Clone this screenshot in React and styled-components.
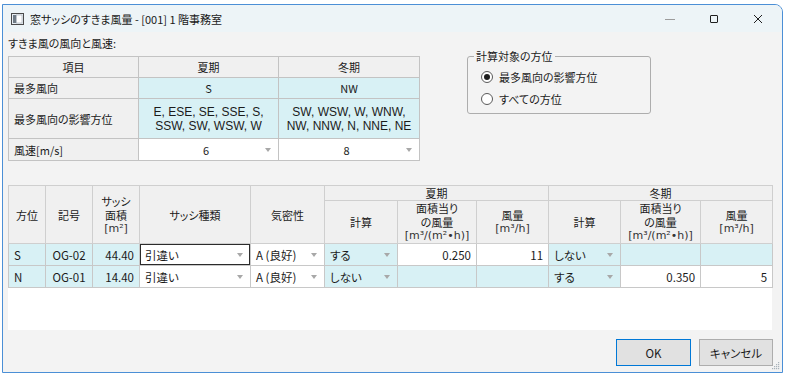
import React from "react";
import styled, { createGlobalStyle } from "styled-components";

const GlobalStyle = createGlobalStyle`
  html, body {
    margin: 0;
    padding: 0;
    background: #ffffff;
  }
  body {
    font-family: "Noto Sans CJK JP", "Noto Sans", sans-serif;
    font-size: 11px;
    color: #1b1b1b;
    font-feature-settings: "palt";
  }
  * {
    box-sizing: border-box;
  }
`;

const summer = {
  direction: "S",
  affected: ["E, ESE, SE, SSE, S,", "SSW, SW, WSW, W"],
  speed: "6",
};

const winter = {
  direction: "NW",
  affected: ["SW, WSW, W, WNW,", "NW, NNW, N, NNE, NE"],
  speed: "8",
};

const rows = [
  {
    dir: "S",
    code: "OG-02",
    area: "44.40",
    sash: "引違い",
    tight: "A (良好)",
    summer: { calc: "する", rate: "0.250", flow: "11" },
    winter: { calc: "しない", rate: "", flow: "" },
    selected: true,
  },
  {
    dir: "N",
    code: "OG-01",
    area: "14.40",
    sash: "引違い",
    tight: "A (良好)",
    summer: { calc: "しない", rate: "", flow: "" },
    winter: { calc: "する", rate: "0.350", flow: "5" },
  },
];

const gridCols = [37, 47, 47, 111, 74, 73, 79, 72, 72, 80, 72];

const App = () => {
  return (
    <>
      <GlobalStyle />
      <Window>
        <TitleBar>
          <TitleIcon width="13" height="12" viewBox="0 0 13 12">
            <rect x="0.5" y="0.5" width="12" height="11" fill="#e8eef3" stroke="#4a4a4a" />
            <rect x="2" y="2" width="3" height="8" fill="#6f7b86" />
            <rect x="5.5" y="2" width="5.5" height="8" fill="#ffffff" stroke="#9aa4ad" strokeWidth="0.6" />
          </TitleIcon>
          <Title>窓サッシのすきま風量 - [001] 1 階事務室</Title>
          <Controls>
            <ControlButton>
              <svg width="10" height="10" viewBox="0 0 10 10">
                <line x1="0" y1="5.5" x2="10" y2="5.5" stroke="#9c9c9c" />
              </svg>
            </ControlButton>
            <ControlButton>
              <svg width="10" height="10" viewBox="0 0 10 10">
                <rect x="1.5" y="1.5" width="7" height="7" rx="0.5" fill="none" stroke="#1f1f1f" />
              </svg>
            </ControlButton>
            <ControlButton>
              <svg width="10" height="10" viewBox="0 0 10 10">
                <path d="M1 1 L9 9 M9 1 L1 9" stroke="#1f1f1f" strokeWidth="1" />
              </svg>
            </ControlButton>
          </Controls>
        </TitleBar>

        <Body>
          <SectionLabel>すきま風の風向と風速:</SectionLabel>
          <TopRow>
            <WindTable>
              <colgroup>
                <col style={{ width: 130 }} />
                <col style={{ width: 140 }} />
                <col style={{ width: 141 }} />
              </colgroup>
              <tbody>
                <tr>
                  <HeadCell $h={21}>項目</HeadCell>
                  <HeadCell>夏期</HeadCell>
                  <HeadCell>冬期</HeadCell>
                </tr>
                <tr>
                  <RowLabel $h={21}>最多風向</RowLabel>
                  <ValueCell>{summer.direction}</ValueCell>
                  <ValueCell>{winter.direction}</ValueCell>
                </tr>
                <tr>
                  <RowLabel $h={40}>最多風向の影響方位</RowLabel>
                  <ValueCell>
                    {summer.affected.map((l) => (
                      <Line key={l}>{l}</Line>
                    ))}
                  </ValueCell>
                  <ValueCell>
                    {winter.affected.map((l) => (
                      <Line key={l}>{l}</Line>
                    ))}
                  </ValueCell>
                </tr>
                <tr>
                  <RowLabel $h={22}>風速[m/s]</RowLabel>
                  <ValueCell $white>
                    <Combo $center>
                      <span>{summer.speed}</span>
                      <Arrow />
                    </Combo>
                  </ValueCell>
                  <ValueCell $white>
                    <Combo $center>
                      <span>{winter.speed}</span>
                      <Arrow />
                    </Combo>
                  </ValueCell>
                </tr>
              </tbody>
            </WindTable>

            <GroupBox>
              <Legend>計算対象の方位</Legend>
              <RadioRow>
                <RadioMark $checked />
                最多風向の影響方位
              </RadioRow>
              <RadioRow>
                <RadioMark />
                すべての方位
              </RadioRow>
            </GroupBox>
          </TopRow>

          <GridBox>
            <Grid>
              <colgroup>
                {gridCols.map((w, i) => (
                  <col key={i} style={{ width: w }} />
                ))}
              </colgroup>
              <thead>
                <tr>
                  <GridHead rowSpan={2} $h={21}>方位</GridHead>
                  <GridHead rowSpan={2}>記号</GridHead>
                  <GridHead rowSpan={2}>
                    <HeadLine>サッシ</HeadLine>
                    <HeadLine>面積</HeadLine>
                    <Unit>[m²]</Unit>
                  </GridHead>
                  <GridHead rowSpan={2}>サッシ種類</GridHead>
                  <GridHead rowSpan={2}>気密性</GridHead>
                  <GridHead colSpan={3}>夏期</GridHead>
                  <GridHead colSpan={3}>冬期</GridHead>
                </tr>
                <tr>
                  <GridHead $h={42}>計算</GridHead>
                  <GridHead>
                    <HeadLine>面積当り</HeadLine>
                    <HeadLine>の風量</HeadLine>
                    <Unit>[m³/(m²•h)]</Unit>
                  </GridHead>
                  <GridHead>
                    <HeadLine>風量</HeadLine>
                    <Unit>[m³/h]</Unit>
                  </GridHead>
                  <GridHead>計算</GridHead>
                  <GridHead>
                    <HeadLine>面積当り</HeadLine>
                    <HeadLine>の風量</HeadLine>
                    <Unit>[m³/(m²•h)]</Unit>
                  </GridHead>
                  <GridHead>
                    <HeadLine>風量</HeadLine>
                    <Unit>[m³/h]</Unit>
                  </GridHead>
                </tr>
              </thead>
              <tbody>
                {rows.map((r) => (
                  <tr key={r.code}>
                    <DataCell $h={22}>{r.dir}</DataCell>
                    <DataCell $align="center">{r.code}</DataCell>
                    <DataCell $align="right">{r.area}</DataCell>
                    <DataCell $white $selected={r.selected}>
                      <Combo>
                        <span>{r.sash}</span>
                        <Arrow />
                      </Combo>
                    </DataCell>
                    <DataCell $white>
                      <Combo>
                        <span>{r.tight}</span>
                        <Arrow />
                      </Combo>
                    </DataCell>
                    {[r.summer, r.winter].map((s, i) => (
                      <React.Fragment key={i}>
                        <DataCell>
                          <Combo>
                            <span>{s.calc}</span>
                            <Arrow />
                          </Combo>
                        </DataCell>
                        <DataCell $align="right" $white={s.rate !== ""}>
                          {s.rate}
                        </DataCell>
                        <DataCell $align="right" $white={s.flow !== ""}>
                          {s.flow}
                        </DataCell>
                      </React.Fragment>
                    ))}
                  </tr>
                ))}
              </tbody>
            </Grid>
          </GridBox>

          <Footer>
            <Button $default $w={75}>
              OK
            </Button>
            <Button $w={74}>キャンセル</Button>
          </Footer>
        </Body>

        <Grip width="8" height="8" viewBox="0 0 8 8">
          {[
            [6, 0],
            [6, 2],
            [4, 2],
            [6, 4],
            [4, 4],
            [2, 4],
            [6, 6],
            [4, 6],
            [2, 6],
            [0, 6],
          ].map(([x, y]) => (
            <rect key={`${x}-${y}`} x={x} y={y} width="1.2" height="1.2" fill="#a9b3bb" />
          ))}
        </Grip>
      </Window>
    </>
  );
};

const Window = styled.div`
  position: relative;
  margin: 4px 0 0 2px;
  width: 781px;
  height: 369px;
  border: 1px solid #4b8fd6;
  border-top-right-radius: 8px;
  background: #f3f3f3;
  display: flex;
  flex-direction: column;
  overflow: hidden;
`;

const TitleBar = styled.div`
  height: 27px;
  flex: none;
  display: flex;
  align-items: center;
  padding-left: 8px;
  background: #edf4f7;
`;

const TitleIcon = styled.svg`
  flex: none;
  margin-top: 1px;
`;

const Title = styled.div`
  margin-left: 6px;
  font-size: 11px;
  color: #1a1a1a;
  white-space: nowrap;
`;

const Controls = styled.div`
  margin-left: auto;
  display: flex;
  padding-right: 2px;
  height: 100%;
`;

const ControlButton = styled.div`
  width: 44px;
  height: 100%;
  display: flex;
  align-items: center;
  justify-content: center;
`;

const Body = styled.div`
  flex: 1;
  display: flex;
  flex-direction: column;
  padding: 3px 9px 6px 5px;
`;

const SectionLabel = styled.div`
  height: 16px;
  line-height: 16px;
  margin-bottom: 5px;
  white-space: nowrap;
`;

const TopRow = styled.div`
  display: flex;
  align-items: flex-start;
`;

const WindTable = styled.table`
  width: 411px;
  border-collapse: collapse;
  table-layout: fixed;
  flex: none;
`;

const cellBase = `
  border: 1px solid #c3c3c3;
  padding: 0;
  font-weight: normal;
  white-space: nowrap;
  overflow: hidden;
`;

const HeadCell = styled.td`
  ${cellBase}
  height: ${(p) => (p.$h ? `${p.$h}px` : "auto")};
  background: #f0f0f0;
  text-align: center;
`;

const RowLabel = styled.td`
  ${cellBase}
  height: ${(p) => `${p.$h}px`};
  background: #f0f0f0;
  padding-left: 5px;
`;

const ValueCell = styled.td`
  ${cellBase}
  background: ${(p) => (p.$white ? "#ffffff" : "#d8f1f5")};
  text-align: center;
`;

const Line = styled.div`
  font-family: "Liberation Sans", "Noto Sans CJK JP", sans-serif;
  font-size: 12px;
  line-height: 14px;
`;

const Combo = styled.div`
  display: flex;
  align-items: center;
  padding: 0 7px 0 0;

  & > span {
    flex: 1;
    text-align: ${(p) => (p.$center ? "center" : "left")};
    padding-left: ${(p) => (p.$center ? "8px" : "5px")};
  }
`;

const Arrow = styled.i`
  flex: none;
  width: 0;
  height: 0;
  border-left: 3.5px solid transparent;
  border-right: 3.5px solid transparent;
  border-top: 4px solid #a8a8a8;
  margin-top: 1px;
`;

const GroupBox = styled.fieldset`
  margin: -8px 0 0 47px;
  width: 184px;
  height: 66px;
  padding: 0 0 0 6px;
  border: 1px solid #adadad;
  border-radius: 3px;
  min-inline-size: 0;
`;

const Legend = styled.legend`
  padding: 0 2px;
  line-height: 16px;
  font-size: 11px;
`;

const RadioRow = styled.div`
  display: flex;
  align-items: center;
  height: 22px;
  padding-left: 7px;
  gap: 6px;
  white-space: nowrap;
  &:first-of-type {
    margin-top: 2px;
  }
`;

const RadioMark = styled.span`
  flex: none;
  width: 12px;
  height: 12px;
  border-radius: 50%;
  border: 1px solid #5a5a5a;
  background: #ffffff;
  display: flex;
  align-items: center;
  justify-content: center;

  &::after {
    content: "";
    width: 6px;
    height: 6px;
    border-radius: 50%;
    background: ${(p) => (p.$checked ? "#1e1e1e" : "transparent")};
  }
`;

const GridBox = styled.div`
  margin-top: 24px;
  width: 764px;
  height: 145px;
  background: #ffffff;
  flex: none;
`;

const Grid = styled.table`
  width: 764px;
  border-collapse: collapse;
  table-layout: fixed;
`;

const GridHead = styled.th`
  ${cellBase}
  border-color: #cfcfcf;
  height: ${(p) => (p.$h ? `${p.$h}px` : "auto")};
  background: #f0f0f0;
  text-align: center;
  vertical-align: middle;
  line-height: 14px;
  font-size: 11px;
  color: #1b1b1b;
`;

const HeadLine = styled.div`
  line-height: 14px;
`;

const Unit = styled.div`
  font-family: "DejaVu Sans", sans-serif;
  font-size: 11px;
  font-weight: normal;
  line-height: 14px;
  color: #333333;
`;

const DataCell = styled.td`
  ${cellBase}
  border-color: #c8c8c8;
  height: ${(p) => (p.$h ? `${p.$h}px` : "auto")};
  background: ${(p) => (p.$white ? "#ffffff" : "#d8f1f5")};
  text-align: ${(p) => p.$align || "left"};
  font-size: 11.5px;
  padding: ${(p) =>
    p.$align === "right" ? "0 5px 0 0" : p.$align === "center" ? "0" : "0 0 0 5px"};
  box-shadow: ${(p) => (p.$selected ? "inset 0 0 0 1px #2b2b2b" : "none")};

  & > div {
    margin-left: -5px;
  }
`;

const Footer = styled.div`
  margin-top: auto;
  display: flex;
  justify-content: flex-end;
  gap: 8px;
`;

const Button = styled.div`
  width: ${(p) => `${p.$w}px`};
  height: 27px;
  display: flex;
  align-items: center;
  justify-content: center;
  background: #e1e1e1;
  border: 1px solid ${(p) => (p.$default ? "#0078d7" : "#adadad")};
  font-size: 11.5px;
  color: #1b1b1b;
`;

const Grip = styled.svg`
  position: absolute;
  right: 2px;
  bottom: 2px;
`;

export default App;
